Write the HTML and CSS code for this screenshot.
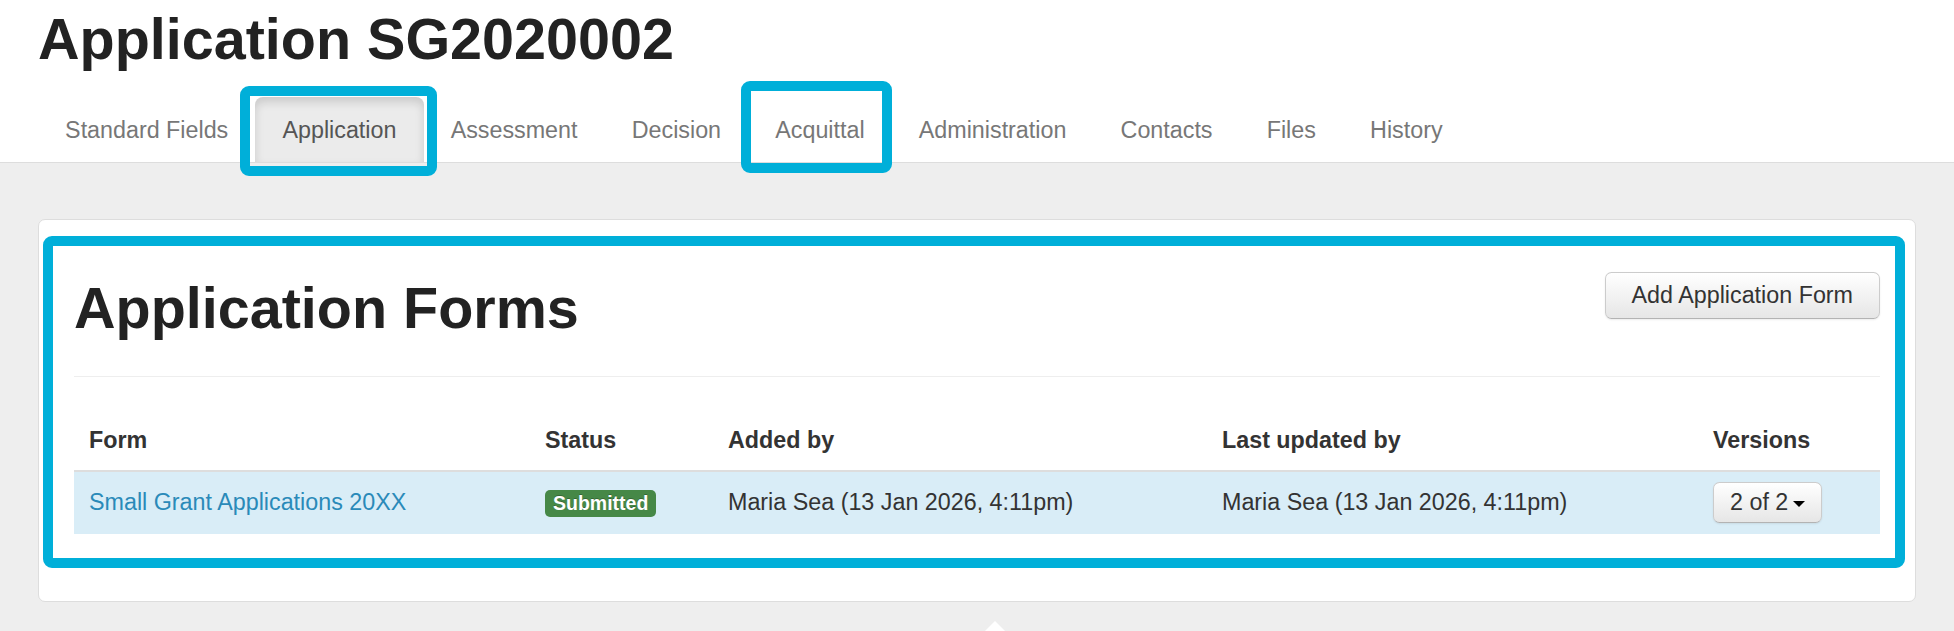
FILE: index.html
```html
<!DOCTYPE html>
<html lang="en">
<head>
<meta charset="utf-8">
<title>Application SG2020002</title>
<link rel="stylesheet" href="styles.css">
</head>
<body>
<header class="page-head">
  <h1 class="app-title">Application SG2020002</h1>
  <ul class="tabs">
    <li class="tab"><a href="#">Standard Fields</a></li>
    <li class="tab active mark-app"><a href="#">Application</a></li>
    <li class="tab"><a href="#">Assessment</a></li>
    <li class="tab"><a href="#">Decision</a></li>
    <li class="tab mark-acq"><a href="#">Acquittal</a></li>
    <li class="tab"><a href="#">Administration</a></li>
    <li class="tab"><a href="#">Contacts</a></li>
    <li class="tab"><a href="#">Files</a></li>
    <li class="tab"><a href="#">History</a></li>
  </ul>
</header>
<main class="main">
  <section class="card">
    <div class="card-mark"></div>
    <div class="section-head">
      <h2 class="section-title">Application Forms</h2>
      <button class="btn btn-add" type="button">Add Application Form</button>
    </div>
    <table class="forms">
      <colgroup>
        <col class="c-form"><col class="c-status"><col class="c-added"><col class="c-updated"><col class="c-versions">
      </colgroup>
      <thead>
        <tr><th>Form</th><th>Status</th><th>Added by</th><th>Last updated by</th><th>Versions</th></tr>
      </thead>
      <tbody>
        <tr class="info">
          <td><a class="form-link" href="#">Small Grant Applications 20XX</a></td>
          <td><span class="label-success">Submitted</span></td>
          <td>Maria Sea (13 Jan 2026, 4:11pm)</td>
          <td>Maria Sea (13 Jan 2026, 4:11pm)</td>
          <td><button class="btn btn-ver" type="button">2 of 2<span class="caret"></span></button></td>
        </tr>
      </tbody>
    </table>
  </section>
  <div class="arrow-up"></div>
</main>
</body>
</html>
```

FILE: styles.css
```css
html, body {
  margin: 0;
  padding: 0;
}
body {
  font-family: "Liberation Sans", Arial, Helvetica, sans-serif;
  background: #eeeeee;
  color: #333333;
  overflow: hidden;
  height: 631px;
}

.page-head {
  background: #ffffff;
  padding: 7px 38px 0;
  border-bottom: 1px solid #dddddd;
}
.app-title {
  margin: 0;
  font-size: 57.5px;
  line-height: 65px;
  font-weight: bold;
  color: #222222;
}
.tabs {
  list-style: none;
  margin: 25px 0 0;
  padding: 0;
  display: flex;
  height: 65px;
}
.tab {
  position: relative;
  height: 65px;
}
.tab a {
  display: block;
  padding: 0 27.1px;
  height: 65px;
  line-height: 67px;
  font-size: 23.3px;
  color: #777777;
  text-decoration: none;
}
.tab.active a {
  color: #555555;
  background: #ebebeb;
  border-radius: 8px 8px 0 0;
  box-shadow: inset 0 5px 10px rgba(0, 0, 0, 0.14);
}
.mark-app::after,
.mark-acq::after {
  content: "";
  position: absolute;
  border: 10px solid #00afd9;
  border-radius: 9px;
  pointer-events: none;
}
.mark-app::after {
  left: -15px;
  right: -13px;
  top: -11px;
  bottom: -14px;
}
.mark-acq::after {
  left: -7.5px;
  right: 0;
  top: -16px;
  bottom: -11px;
}

.main {
  padding: 56px 38px 0;
}
.card {
  position: relative;
  background: #ffffff;
  border: 1px solid #dddddd;
  border-radius: 7px;
  padding: 52px 35px 67px;
}
.card-mark {
  position: absolute;
  left: 4px;
  right: 10px;
  top: 16px;
  bottom: 33px;
  border: 10px solid #00afd9;
  border-radius: 9px;
  pointer-events: none;
}
.section-head {
  display: flex;
  justify-content: space-between;
  align-items: flex-start;
  padding-bottom: 35px;
  border-bottom: 1px solid #eeeeee;
}
.section-title {
  margin: 4px 0 0;
  font-size: 57.5px;
  line-height: 65px;
  font-weight: bold;
  color: #222222;
}
.btn {
  font-family: "Liberation Sans", Arial, Helvetica, sans-serif;
  font-size: 23.3px;
  color: #333333;
  background: linear-gradient(#ffffff, #e6e6e6);
  border: 1px solid #cccccc;
  border-bottom-color: #b3b3b3;
  border-radius: 6.5px;
  box-shadow: inset 0 1px 0 rgba(255, 255, 255, 0.2), 0 1px 2px rgba(0, 0, 0, 0.08);
  cursor: pointer;
  margin: 0;
}
.btn-add {
  height: 47px;
  line-height: 45px;
  padding: 0 26px;
}
.btn-ver {
  height: 41px;
  line-height: 39px;
  padding: 0 16px;
  display: inline-flex;
  align-items: center;
}
.caret {
  display: inline-block;
  width: 0;
  height: 0;
  margin-left: 5px;
  margin-top: 2px;
  border-top: 6.5px solid #000000;
  border-left: 6px solid transparent;
  border-right: 6px solid transparent;
}

.forms {
  width: 100%;
  margin-top: 34px;
  border-collapse: collapse;
  table-layout: fixed;
  font-size: 23.3px;
}
.c-form { width: 456px; }
.c-status { width: 183px; }
.c-added { width: 494px; }
.c-updated { width: 491px; }
.c-versions { width: 182px; }
.forms th {
  text-align: left;
  font-weight: bold;
  color: #333333;
  padding: 13px 15px;
  line-height: 32.5px;
  border-bottom: 2px solid #dddddd;
  white-space: nowrap;
}
.forms td {
  padding: 0 15px;
  height: 62px;
  line-height: 32.5px;
  vertical-align: middle;
  color: #333333;
  white-space: nowrap;
}
.forms tr.info td {
  background: #d9edf7;
}
.form-link {
  color: #2a8ab9;
  text-decoration: none;
}
.label-success {
  display: inline-block;
  height: 27px;
  line-height: 27px;
  padding: 0 8px;
  background: #468847;
  color: #ffffff;
  font-size: 19.5px;
  font-weight: bold;
  border-radius: 5px;
  text-shadow: 0 -1px 0 rgba(0, 0, 0, 0.25);
  vertical-align: middle;
  margin-top: -2px;
}

.arrow-up {
  width: 0;
  height: 0;
  margin: 19px 0 0 947px;
  border-bottom: 10px solid #ffffff;
  border-left: 10px solid transparent;
  border-right: 10px solid transparent;
}
```
